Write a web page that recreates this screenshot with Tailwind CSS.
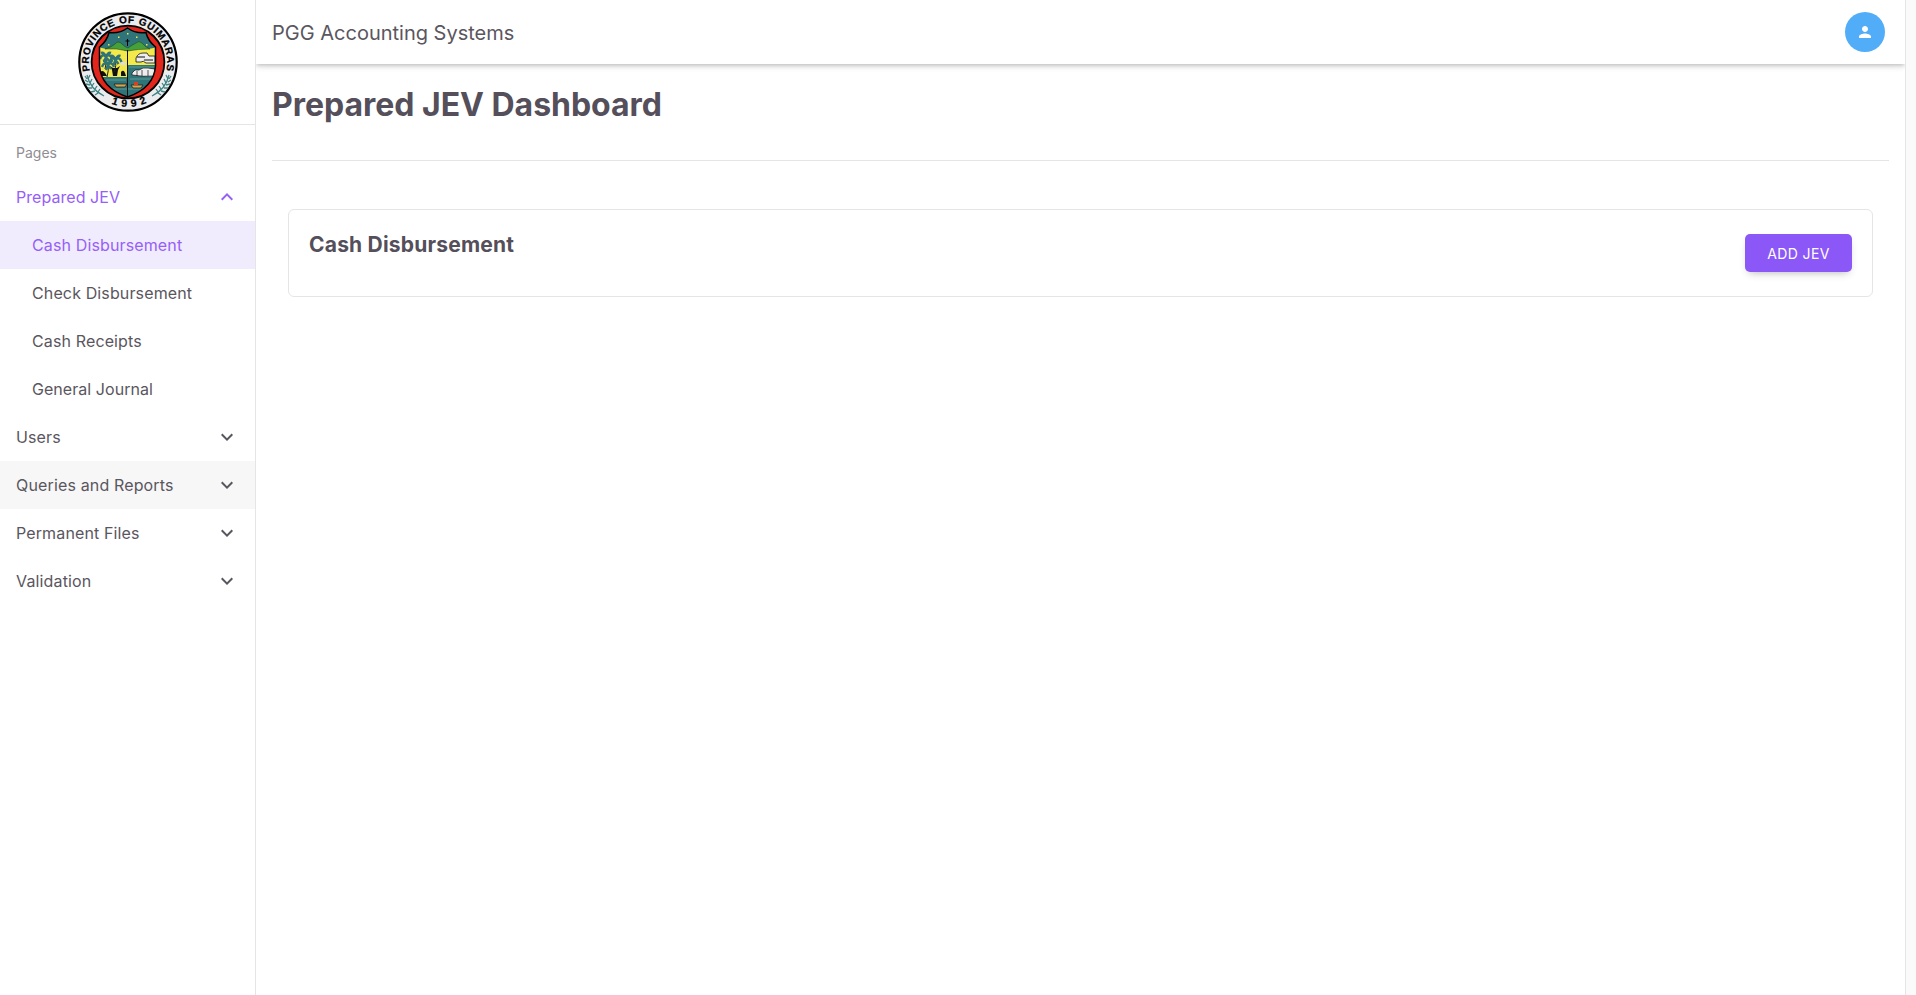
<!DOCTYPE html>
<html lang="en">
<head>
<meta charset="utf-8">
<title>PGG Accounting Systems</title>
<script src="https://cdn.jsdelivr.net/npm/@tailwindcss/browser@4"></script>
</head>
<body class="bg-[#fafafa] font-['Inter',sans-serif] text-[#544f5a]">
<div class="flex h-[995px] w-[1906px] overflow-hidden border-r border-[#e5e5e5] bg-white">
  <aside class="w-64 shrink-0 border-r border-[#e5e5e5]">
    <div class="flex h-[125px] justify-center border-b border-[#e5e5e5] pt-3 pl-px">
      <svg class="size-[100px]" viewBox="0 0 100 100" font-family="Liberation Sans, sans-serif" font-weight="700">
        <defs>
          <path id="arcTop" d="M11.8 59A39.2 39.2 0 1 1 88.2 59"/>
          <path id="arcBottom" d="M28 89.2A45 45 0 0 0 72 89.2"/>
          <clipPath id="shield"><path d="M21.5 35Q29 29 31 20.5Q41 22 49.5 16Q58 22 68 20.5Q70 29 77.5 35V54Q76 76 49.5 85Q23 76 21.5 54Z"/></clipPath>
          <g id="laurel" fill="none" stroke="#3f8485" stroke-width="1.3"><path d="M9 63Q12 77 26 84"/><path d="M9 67l-2-3M10 70l-3-2M12 73l-4-1M14 76l-4 0M17 79l-4 1M20 81l-3 2M10 67l2-4M12 71l2-4M14 74l2-3M17 77l2-3M20 80l2-3"/></g>
          <g id="palm" fill="none"><path stroke="#222" stroke-width="1" d="M0 0q1 5-1 12"/><path stroke="#2f7478" stroke-width="2.4" d="M0 0q-4-4-6 2M0 0q4-4 6 2M0 0q-2-5-5-4M0 0q2-5 5-4M0 0l-2 5M0 0l3 4"/></g>
        </defs>
        <circle cx="50" cy="50" r="48.7" fill="#ececee" stroke="#000" stroke-width="2.2"/>
        <circle cx="50" cy="50" r="36.4" fill="#e1261c" stroke="#000" stroke-width="1.8"/>
        <g clip-path="url(#shield)">
          <path fill="#2f7478" d="M20 14h60v74H20z"/>
          <path fill="#f3e94b" d="M20 35l8 2q12-1 21.5 2q10-3 21-2l10-2v18H50v12H20z"/>
          <path fill="#45a03c" stroke="#183c18" stroke-width=".5" d="M27 37q7-2 10-5q3-4 7 0q3 3 6 4q4-3 8-5q3-3 6 0q3 4 8 6q-12 0-22.500 2q-10-3-22.500-2z"/>
          <path fill="#f3e94b" d="M30 32h1.500v1.500H30zM40 24.500h1.500V26H40zM49 21h1.500v1.500H49zM58 24.500h1.500V26H58zM68 32h1.500v1.500H68z"/>
          <path stroke="#000" d="M49.500 27v7M47.500 29h4"/>
          <path fill="#ececec" stroke="#111" stroke-width=".8" d="M58 50v-4q2-5 7-5h4l2 3h6v7H68q-3-3-5-1z"/>
          <path stroke="#111" stroke-width="1.2" d="M59 45h8M66 48h9"/>
          <path fill="#eee" stroke="#111" stroke-width=".7" d="M54 63v-2l3-3h4l4-2h5l7 1v7q-12 1-23-1z"/>
          <path stroke="#111" stroke-width=".7" d="M59 59v5M64 58v6M70 58v6"/>
          <path fill="#111" d="M32 54l3 2h4l3-2-2 4-1 6h-4l-1-6zM21 61q4-5 8 3H21zM43 60q3-4 5 4h-5z"/>
          <path fill="#ddd" d="M42 51q2-3 5-1l1 3h-5z"/>
          <use href="#palm" x="28" y="45"/><use href="#palm" x="37.500" y="48"/><use href="#palm" x="30" y="53"/>
          <path fill="none" stroke="#78b7ad" stroke-width=".6" d="M51 55h26M52 67h22M28 68h20M35 77h28"/>
          <path fill="#d3a750" stroke="#151515" stroke-width=".7" d="M36 72h13l-2 3h-9zM53 73h12l-2 3h-8z"/><path fill="#e43b22" d="M56 70h4v3h-4z"/>
          <path fill="#111" d="M49 38h1v48h-1z"/>
        </g>
        <path fill="none" stroke="#000" stroke-width="1.5" d="M21.500 35Q29 29 31 20.500Q41 22 49.500 16Q58 22 68 20.500Q70 29 77.500 35V54Q76 76 49.500 85Q23 76 21.500 54Z"/>
        <use href="#laurel"/><use href="#laurel" transform="matrix(-1 0 0 1 100 0)"/>
        <text font-size="10" stroke="#000" stroke-width=".25"><textPath href="#arcTop" textLength="140">PROVINCE OF GUIMARAS</textPath></text>
        <text font-size="10.5" stroke="#000" stroke-width=".25"><textPath href="#arcBottom" startOffset="6" textLength="36">1992</textPath></text>
      </svg>
    </div>
    <p class="flex h-12 items-end px-4 pb-[10px] text-sm leading-5 text-[#8f8c93]">Pages</p>
    <nav class="text-base tracking-[0.13px] text-[#5a5660]">
      <a class="flex h-12 items-center justify-between px-4 tracking-[0.05px] text-[#9560f8]">Prepared JEV<svg class="size-6" viewBox="0 0 24 24" fill="currentColor"><path d="M7.41 15.41 12 10.83l4.59 4.58L18 14l-6-6-6 6z"/></svg></a>
      <a class="flex h-12 items-center bg-[#f1ecfd] px-8 text-[#9560f8]">Cash Disbursement</a>
      <a class="flex h-12 items-center px-8">Check Disbursement</a>
      <a class="flex h-12 items-center px-8">Cash Receipts</a>
      <a class="flex h-12 items-center px-8 tracking-[0.05px]">General Journal</a>
      <a class="flex h-12 items-center justify-between px-4">Users<svg class="size-6" viewBox="0 0 24 24" fill="currentColor"><path d="M7.41 8.59 12 13.17l4.59-4.58L18 10l-6 6-6-6z"/></svg></a>
      <a class="flex h-12 items-center justify-between bg-[#f7f7f7] px-4 tracking-[0.15px]">Queries and Reports<svg class="size-6" viewBox="0 0 24 24" fill="currentColor"><path d="M7.41 8.59 12 13.17l4.59-4.58L18 10l-6 6-6-6z"/></svg></a>
      <a class="flex h-12 items-center justify-between px-4">Permanent Files<svg class="size-6" viewBox="0 0 24 24" fill="currentColor"><path d="M7.41 8.59 12 13.17l4.59-4.58L18 10l-6 6-6-6z"/></svg></a>
      <a class="flex h-12 items-center justify-between px-4 tracking-[0.15px]">Validation<svg class="size-6" viewBox="0 0 24 24" fill="currentColor"><path d="M7.41 8.59 12 13.17l4.59-4.58L18 10l-6 6-6-6z"/></svg></a>
    </nav>
  </aside>
  <div class="flex min-w-0 flex-1 flex-col overflow-hidden">
    <header class="flex h-16 shrink-0 items-center justify-between bg-white pr-5 pl-4 shadow-[0_2px_4px_-1px_rgba(0,0,0,0.2),0_4px_5px_0_rgba(0,0,0,0.06),0_1px_10px_0_rgba(0,0,0,0.05)]">
      <span class="pt-0.5 text-xl text-[#5a5660]">PGG Accounting Systems</span>
      <span class="flex size-10 items-center justify-center rounded-full bg-[#52adf8] text-white"><svg class="size-[18px]" viewBox="0 0 24 24" fill="currentColor"><path d="M12 12c2.21 0 4-1.79 4-4s-1.79-4-4-4-4 1.79-4 4 1.79 4 4 4m0 2c-2.67 0-8 1.34-8 4v2h16v-2c0-2.66-5.33-4-8-4"/></svg></span>
    </header>
    <main class="px-4">
      <h1 class="flex h-[97px] items-start border-b border-[#e5e5e5] pt-[21px] text-[32px] leading-10 font-bold tracking-[-0.02px]">Prepared JEV Dashboard</h1>
      <section class="mx-4 mt-12 flex h-[88px] items-start justify-between rounded-md border border-[#e5e5e5] px-5">
        <h2 class="pt-[19px] text-[21px] leading-8 font-bold tracking-[0.2px]">Cash Disbursement</h2>
        <button class="mt-6 h-[38px] w-[107px] rounded-[5px] bg-[#8c57f7] pt-px text-sm tracking-[0.4px] text-white shadow-[0_4px_8px_-4px_rgba(58,53,65,0.42)]">ADD JEV</button>
      </section>
    </main>
  </div>
</div>
</body>
</html>
